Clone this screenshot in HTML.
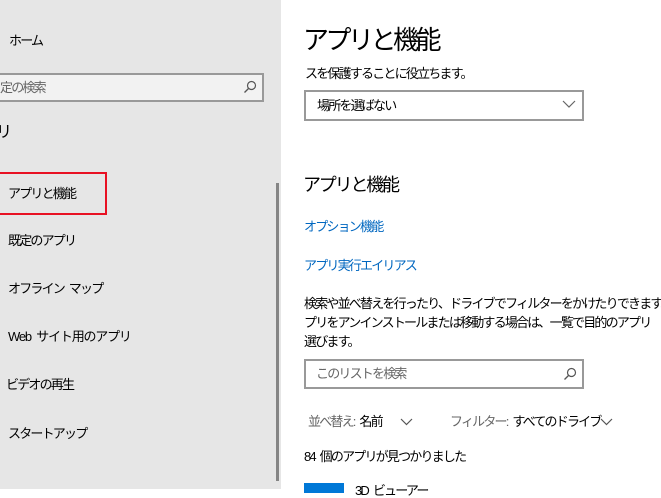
<!DOCTYPE html>
<html><head><meta charset="utf-8"><style>
*{margin:0;padding:0;box-sizing:border-box}
body{width:661px;height:489px;overflow:hidden;background:#fff;position:relative;font-family:"Liberation Sans","Noto Sans CJK JP",sans-serif;color:#000;font-size:13px;letter-spacing:-1.8px;word-spacing:3px}
.a{position:absolute;white-space:nowrap;line-height:1}
#left{position:absolute;left:0;top:0;width:281px;height:489px;background:#e6e6e6;overflow:hidden}
.box{position:absolute;border:2px solid #999;background:#fff}
.link{color:#0067c0}
.g{color:#666}
</style></head><body>
<div id="left">
<div class="a" style="left:9px;top:34px">ホーム</div>
<div class="box" style="left:-4px;top:73px;width:268px;height:29px;background:#f2f2f2"></div>
<div class="a g" style="left:0px;top:81px">定の検索</div>
<svg class="a" style="left:243px;top:80px" width="14" height="14" viewBox="0 0 14 14"><circle cx="8.5" cy="5.5" r="4" fill="none" stroke="#555" stroke-width="1.2"/><path d="M5.5 8.5L1.5 12.5" stroke="#555" stroke-width="1.3"/></svg>
<div class="a" style="left:-4px;top:125px;font-size:16px">リ</div>
<div style="position:absolute;left:-2px;top:172px;width:109px;height:43px;border:2px solid #e81123"></div>
<div class="a" style="left:8px;top:187px">アプリと機能</div>
<div class="a" style="left:8px;top:234px">既定のアプリ</div>
<div class="a" style="left:8px;top:282px">オフライン マップ</div>
<div class="a" style="left:8px;top:330px;letter-spacing:-1.2px">Web サイト用のアプリ</div>
<div class="a" style="left:6px;top:378px">ビデオの再生</div>
<div class="a" style="left:8px;top:427px">スタートアップ</div>
<div style="position:absolute;left:276px;top:183px;width:3px;height:298px;background:#858585"></div>
</div>
<div class="a" style="left:303px;top:27px;font-size:26px;letter-spacing:-3.5px">アプリと機能</div>
<div class="a" style="left:305px;top:67px">スを保護することに役立ちます。</div>
<div class="box" style="left:304px;top:90px;width:280px;height:31px"></div>
<div class="a" style="left:317px;top:99px">場所を選ばない</div>
<svg class="a" style="left:562px;top:100px" width="14" height="9" viewBox="0 0 14 9"><path d="M1 1L7 7L13 1" fill="none" stroke="#666" stroke-width="1.2"/></svg>
<div class="a" style="left:303px;top:176px;font-size:18px;letter-spacing:-2.2px">アプリと機能</div>
<div class="a link" style="left:304px;top:220px">オプション機能</div>
<div class="a link" style="left:304px;top:259px">アプリ実行エイリアス</div>
<div class="a" style="left:304px;top:297px">検索や並べ替えを行ったり、ドライブでフィルターをかけたりできます。</div>
<div class="a" style="left:304px;top:316px">プリをアンインストールまたは移動する場合は、一覧で目的のアプリ</div>
<div class="a" style="left:304px;top:335px">選びます。</div>
<div class="box" style="left:304px;top:359px;width:280px;height:30px"></div>
<div class="a g" style="left:316px;top:367px">このリストを検索</div>
<svg class="a" style="left:563px;top:367px" width="14" height="14" viewBox="0 0 14 14"><circle cx="8.5" cy="5.5" r="4" fill="none" stroke="#555" stroke-width="1.2"/><path d="M5.5 8.5L1.5 12.5" stroke="#555" stroke-width="1.3"/></svg>
<div class="a" style="left:308px;top:415px"><span class="g">並べ替え:</span> 名前</div>
<svg class="a" style="left:400px;top:418px" width="13" height="8" viewBox="0 0 13 8"><path d="M1 1L6.5 6.5L12 1" fill="none" stroke="#555" stroke-width="1.2"/></svg>
<div class="a" style="left:450px;top:415px"><span class="g">フィルター:</span> すべてのドライブ</div>
<svg class="a" style="left:600px;top:418px" width="13" height="8" viewBox="0 0 13 8"><path d="M1 1L6.5 6.5L12 1" fill="none" stroke="#555" stroke-width="1.2"/></svg>
<div class="a" style="left:304px;top:450px">84 個のアプリが見つかりました</div>
<div style="position:absolute;left:304px;top:483px;width:40px;height:10px;background:#0078d7"></div>
<div class="a" style="left:355px;top:484px">3D ビューアー</div>
</body></html>
